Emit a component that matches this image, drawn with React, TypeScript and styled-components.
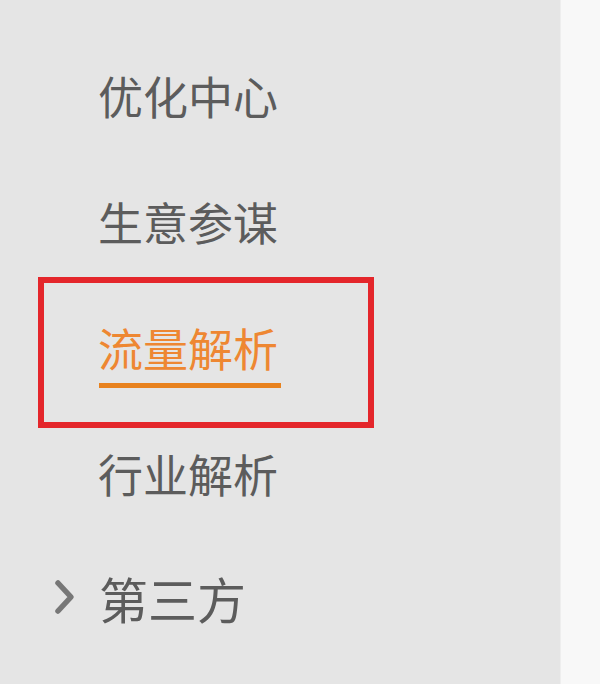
import React from "react";
import styled, { createGlobalStyle } from "styled-components";

const Global = createGlobalStyle`
  html, body { margin: 0; padding: 0; background: #f8f8f8; }
  body { font-family: "Noto Sans CJK SC", "Noto Sans", sans-serif; }
`;

const Page = styled.div`
  display: flex;
  width: 600px;
  height: 684px;
  overflow: hidden;
`;

const Sidebar = styled.nav`
  width: 560px;
  height: 684px;
  background: #e5e5e5;
  display: flex;
  flex-direction: column;
  padding-top: 32px;
  box-sizing: border-box;
`;

const Rest = styled.div`
  flex: 1;
  background: #f8f8f8;
  border-left: 1px solid #eeeeee;
`;

const Item = styled.div<{ $active?: boolean }>`
  position: relative;
  height: 126px;
  display: flex;
  align-items: center;
  padding-left: 98px;
  font-size: 45px;
  line-height: 45px;
  color: ${(p) => (p.$active ? "#ee8732" : "#5c5c5c")};
`;

const Label = styled.span<{ $active?: boolean }>`
  position: relative;
  &::after {
    content: "";
    display: ${(p) => (p.$active ? "block" : "none")};
    position: absolute;
    left: 1px;
    top: calc(100% + 13px);
    width: 182px;
    height: 5px;
    background: #e8821e;
  }
`;

const Highlight = styled.div`
  position: absolute;
  left: 38px;
  top: -7px;
  width: 336px;
  height: 151px;
  box-sizing: border-box;
  border: 6px solid #e4262b;
  pointer-events: none;
`;

const Group = styled.div`
  height: 126px;
  display: flex;
  align-items: center;
  padding-left: 53px;
  padding-bottom: 4px;
  box-sizing: border-box;
  gap: 24px;
  font-size: 49px;
  line-height: 49px;
  color: #5c5c5c;
`;

const Chevron = () => (
  <svg width="22" height="36" viewBox="0 0 22 36">
    <path d="M5 4 L18 18 L5 32" fill="none" stroke="#777" strokeWidth="5.5" strokeLinecap="round" strokeLinejoin="round" />
  </svg>
);

export default function App() {
  return (
    <>
      <Global />
      <Page>
        <Sidebar>
          <Item>
            <Label>优化中心</Label>
          </Item>
          <Item>
            <Label>生意参谋</Label>
          </Item>
          <Item $active>
            <Label $active>流量解析</Label>
            <Highlight />
          </Item>
          <Item>
            <Label>行业解析</Label>
          </Item>
          <Group>
            <Chevron />
            <span>第三方</span>
          </Group>
        </Sidebar>
        <Rest />
      </Page>
    </>
  );
}
